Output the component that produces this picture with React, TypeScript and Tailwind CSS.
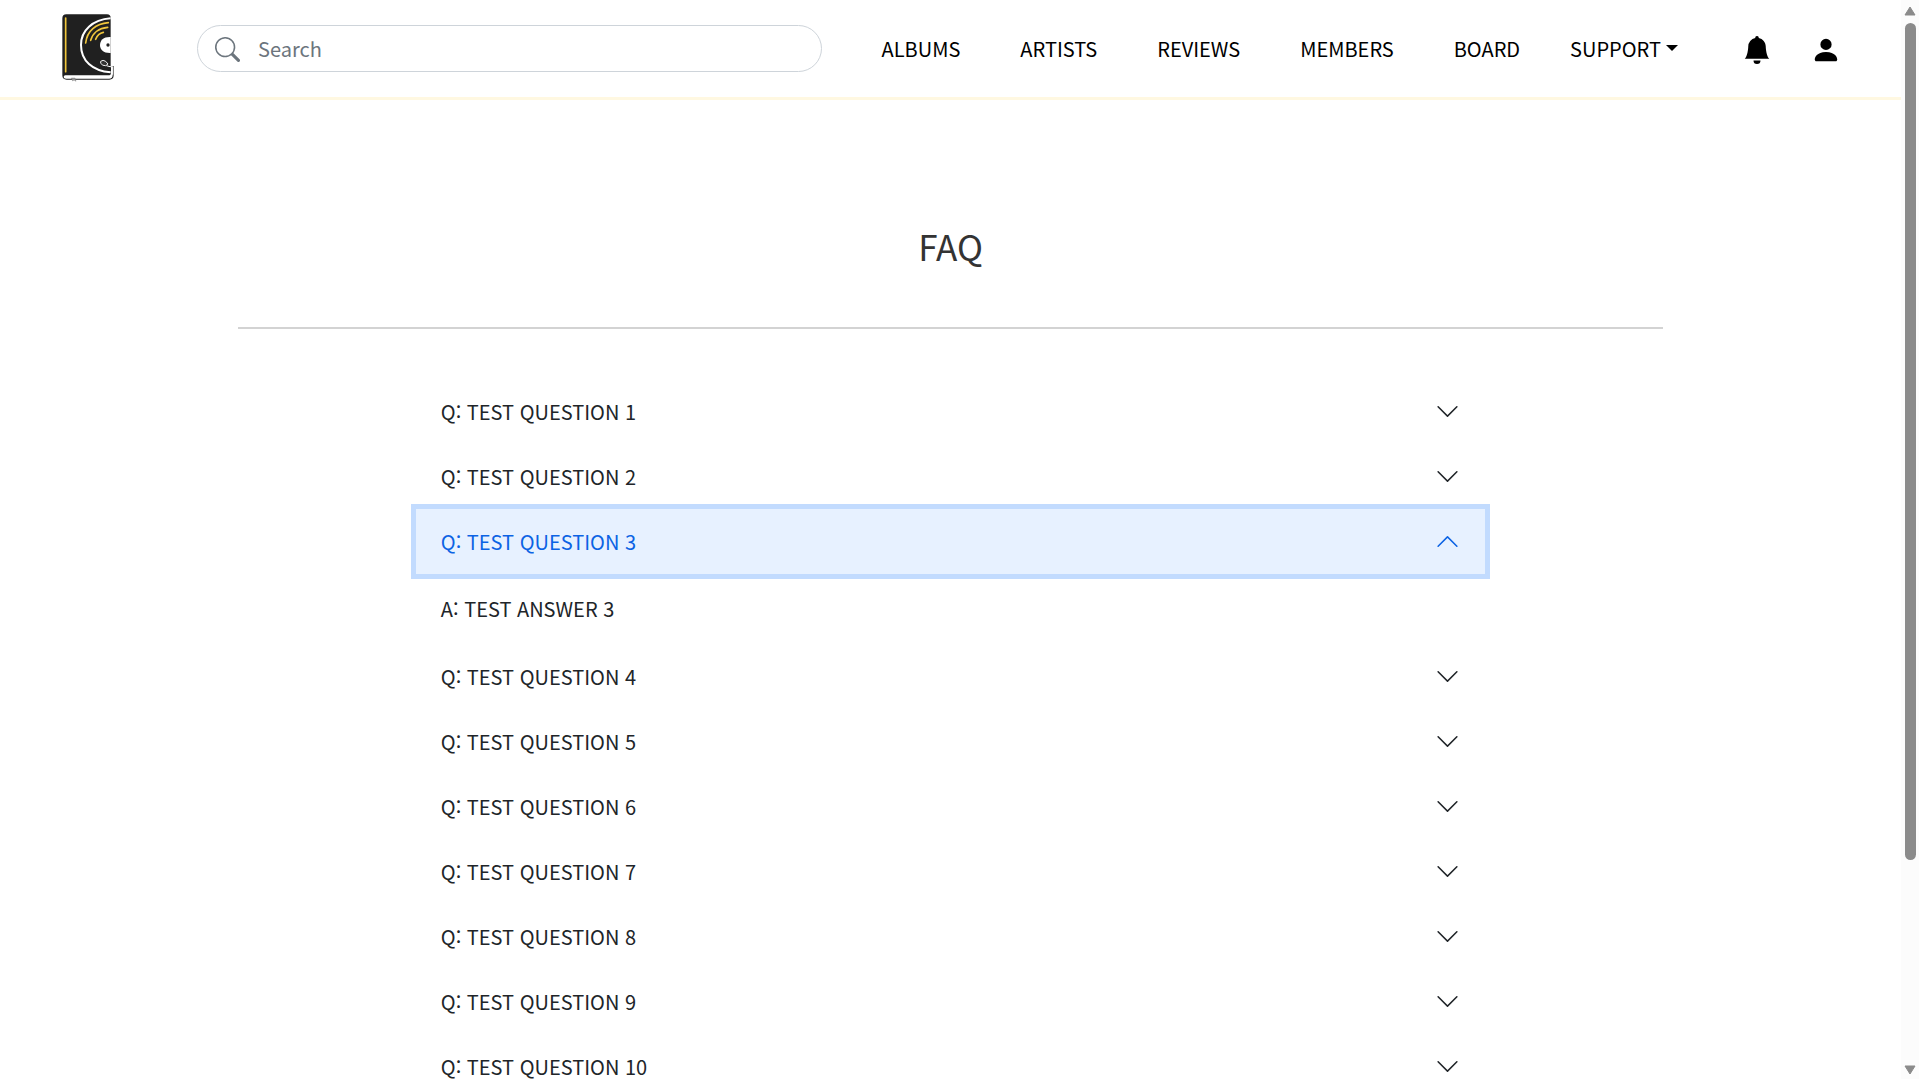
import { useState } from "react";
import { BsBellFill, BsChevronDown, BsPersonFill, BsSearch } from "react-icons/bs";

const links = ["ALBUMS", "ARTISTS", "REVIEWS", "MEMBERS", "BOARD"];
const questions = [1, 2, 3, 4, 5, 6, 7, 8, 9, 10];

function Logo() {
  return (
    <svg viewBox="33 39 160 210" className="h-[70px] w-[54px]" aria-hidden="true">
      <path
        d="M48 43H170Q181 43 181 54V198H190V226Q190 239 177 239H49Q36 239 36 226V55Q36 43 48 43Z"
        fill="#202020"
      />
      <path d="M45 226H174Q182 226 182 219V201H187V225Q187 236 176 236H47Q40 236 40 231Q40 226 45 226Z" fill="#fff" />
      <path d="M181 55C126 59 92 92 92 135C92 182 126 213 181 217" fill="none" stroke="#fff" strokeWidth="6" />
      <path d="M181 111C160 110 149 121 149 135C149 149 160 160 181 159Z" fill="#fff" />
      <circle cx="173" cy="135" r="5" fill="#202020" />
      <g fill="none" stroke="#f0c63c" strokeWidth="5" strokeLinecap="round">
        <path d="M46 54V215" />
        <path d="M106 129C110 93 137 71 174 68" />
        <path d="M121 121C127 99 146 84 172 82" />
        <path d="M136 118C140 107 148 99 159 97" />
      </g>
      <path d="M168 197L179 200H187V224" fill="none" stroke="#fff" strokeWidth="3" />
      <path d="M151 184Q158 178 166 184L173 192L166 197Q157 198 151 190Z" fill="#333" stroke="#eee" strokeWidth="3" />
      <path d="M63 234H74L77 244L71 240L67 243Z" fill="#999" stroke="#666" />
    </svg>
  );
}

function Header() {
  return (
    <header className="flex h-[100px] items-center border-b-3 border-[#fff8e1] pr-[60px] pl-[61px]">
      <a href="#home" aria-label="Home" className="shrink-0 pb-px">
        <Logo />
      </a>
      <label className="ml-[82px] flex h-[47px] min-w-0 flex-1 items-center gap-[18px] rounded-full border border-[#ced4da] pl-[17px] text-[#6c757d]">
        <BsSearch size={25} className="mt-[2px] shrink-0" />
        <input
          type="search"
          aria-label="Search"
          placeholder="Search"
          className="min-w-0 flex-1 bg-transparent outline-none placeholder:text-[#6c757d]"
        />
      </label>
      <nav className="ml-[60px] flex items-center gap-[60px] text-black">
        {links.map((name) => (
          <a key={name} href={"#" + name.toLowerCase()}>
            {name}
          </a>
        ))}
      </nav>
      <button type="button" className="ml-[50px] flex items-center gap-[5px] text-black">
        SUPPORT
        <span className="mb-[2px] border-x-6 border-t-6 border-x-transparent border-t-black" />
      </button>
      <button type="button" aria-label="Notifications" className="ml-[65px] pt-[2px] text-black">
        <BsBellFill size={28} />
      </button>
      <button type="button" aria-label="Account" className="ml-[40px] pt-[2px] text-black">
        <BsPersonFill size={30} />
      </button>
    </header>
  );
}

function Faq() {
  const [open, setOpen] = useState(3);
  return (
    <main className="mx-auto w-3/4">
      <h1 className="mt-[119px] text-center text-[35px] leading-[54px] text-[#333]">FAQ</h1>
      <hr className="mt-[54px] border-t-2 border-[#d3d3d3]" />
      <div className="mx-auto mt-[50px] w-3/4">
        {questions.map((n) => (
          <section key={n}>
            <h2>
              <button
                type="button"
                aria-expanded={open === n}
                onClick={() => setOpen(open === n ? 0 : n)}
                className={
                  open === n
                    ? "flex h-[65px] w-full items-center justify-between bg-[#e7f1ff] px-[25px] text-[#0c63e4] shadow-[0_0_0_5px_#c2dbfe]"
                    : "flex h-[65px] w-full items-center justify-between px-[25px]"
                }
              >
                Q: TEST QUESTION {n}
                <BsChevronDown size={25} className={open === n ? "rotate-180" : ""} />
              </button>
            </h2>
            {open === n && <p className="px-[25px] py-[20px]">A: TEST ANSWER {n}</p>}
          </section>
        ))}
      </div>
    </main>
  );
}

function ScrollRail() {
  return (
    <div aria-hidden="true" className="flex w-[18px] shrink-0 flex-col items-center bg-[#fcfcfc] pt-[6px] pb-[4px]">
      <svg viewBox="0 0 12 10" className="h-[10px] w-[12px]">
        <path d="M6 1L11 9H1Z" fill="#8b8b8b" stroke="#8b8b8b" strokeLinejoin="round" />
      </svg>
      <div className="flex w-[11px] flex-1 flex-col pt-[7px]">
        <div className="h-[80.3%] rounded-full bg-[#8b8b8b]" />
      </div>
      <svg viewBox="0 0 12 10" className="h-[10px] w-[12px]">
        <path d="M6 9L1 1H11Z" fill="#8b8b8b" stroke="#8b8b8b" strokeLinejoin="round" />
      </svg>
    </div>
  );
}

export default function App() {
  return (
    <div
      lang="ko"
      className="flex h-screen overflow-hidden bg-white font-['Noto_Sans_CJK_KR',sans-serif] text-[20px] leading-[30px] text-[#212529]"
    >
      <div className="min-w-0 flex-1 overflow-hidden">
        <Header />
        <Faq />
      </div>
      <ScrollRail />
    </div>
  );
}
